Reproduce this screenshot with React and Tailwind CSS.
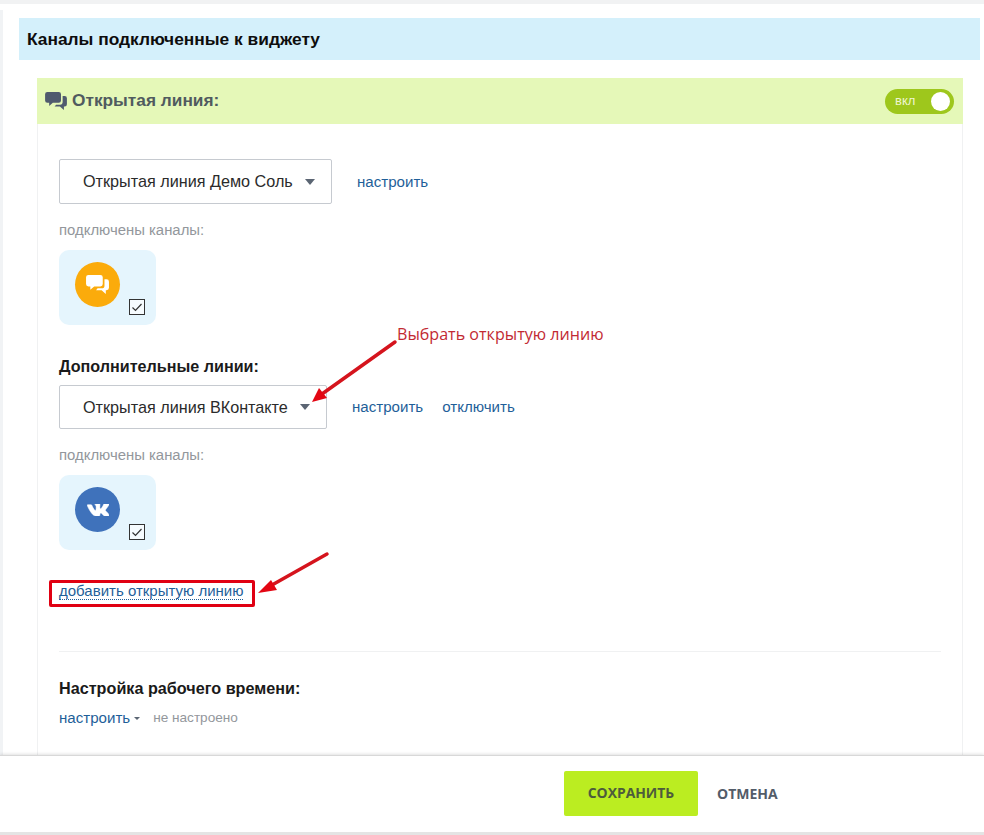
import React from "react";

const Chat = ({ className, fill }) => (
  <svg viewBox="0 0 24 22" className={className} fill={fill}>
    <path d="M2.5 1h12.5A2.5 2.5 0 0 1 17.500 3.500v7A2.500 2.500 0 0 1 15 13H8.500L4.500 16.500V13h-2A2.500 2.500 0 0 1 0 10.500v-7A2.500 2.500 0 0 1 2.500 1z" />
    <path d="M19.300 5.500h2.200A2.500 2.500 0 0 1 24 8v6.500a2.500 2.500 0 0 1-2.500 2.500h-.8v4l-4.400-4H10.500l1.600-2h4.400a2.800 2.800 0 0 0 2.800-2.800z" />
  </svg>
);

const Caret = () => <span className="w-0 h-0 border-x-[5.5px] border-x-transparent border-t-[6px] border-t-[#5b6573]" />;

const Check = () => (
  <span className="absolute left-[70px] top-[49px] w-[16px] h-[16px] border border-[#333] bg-[#f6fbfe] flex items-center justify-center">
    <svg viewBox="0 0 12 12" className="w-[12px] h-[12px]" fill="none" stroke="#333" strokeWidth="1.2"><path d="M1.5 6.5 4.5 9.5 10.5 3" /></svg>
  </span>
);

const Tile = ({ color, children }) => (
  <div className="relative w-[97px] h-[75px] rounded-[10px] bg-[#e5f5fd]">
    <div className="absolute left-[16px] top-[12px] w-[45px] h-[45px] rounded-full flex items-center justify-center" style={{ backgroundColor: color }}>{children}</div>
    <Check />
  </div>
);

const Select = ({ w, h, label }) => (
  <div className={`${w} ${h} border border-[#c6cad0] rounded-[2px] bg-white flex items-center pl-[23px] text-[16.2px] text-[#2b2b2b]`}>
    <span>{label}</span>
    <span className="ml-[12px] flex"><Caret /></span>
  </div>
);

const Link = ({ children }) => <a className="text-[#1f5f99] text-[15.1px]">{children}</a>;

export default function App() {
  return (
    <div className="relative w-[984px] h-[835px] overflow-hidden bg-white flex flex-col font-['Liberation_Sans',Arial,sans-serif]">
      <div className="h-[4px] bg-[#f1f2f3] shrink-0" />
      <div className="flex-1 min-h-0 overflow-hidden mt-[6px] pl-[19px] pr-[4px] pt-[8px] border-l-[3px] border-[#f1f3f5]">
        <div className="-ml-[3px] h-[42px] bg-[#d4f0fb] flex items-center pl-[8px] pt-[1px] text-[17.35px] font-bold text-[#0d0d0d]">Каналы подключенные к виджету</div>
        <div className="-ml-[3px] px-[18px] pr-[17px] pt-[18px]">
          <div className="border-x border-[#f0f1f2] h-[700px]">
            <div className="-mx-px h-[46px] bg-[#e5f8b8] flex items-center justify-between pl-[8px] pr-[9px]">
              <div className="flex items-center gap-[5px] pb-[1px] text-[17.3px] font-bold text-[#505b5f]">
                <Chat className="w-[22px] h-[20px]" fill="#4f5a6e" />
                <span>Открытая линия:</span>
              </div>
              <div className="relative w-[69px] h-[25px] rounded-full bg-[#9ec71c] flex items-center pl-[10px] text-[13px] text-[#eef6d0]">
                вкл
                <span className="absolute right-[4px] top-[3px] w-[19px] h-[19px] rounded-full bg-white" />
              </div>
            </div>
            <div className="pl-[21px] pr-[21px] pt-[35px]">
              <div className="flex items-center gap-[25px]">
                <Select w="w-[273px]" h="h-[45px]" label="Открытая линия Демо Соль" />
                <span className="pt-[1px]"><Link>настроить</Link></span>
              </div>
              <div className="mt-[16px] h-[20px] leading-[20px] text-[14.9px] text-[#93979c]">подключены каналы:</div>
              <div className="mt-[10px]">
                <Tile color="#fbab0b"><Chat className="w-[23px] h-[21px]" fill="#fff" /></Tile>
              </div>
              <div className="mt-[31px] h-[20px] leading-[20px] text-[16.15px] font-bold text-[#1a1a1a]">Дополнительные линии:</div>
              <div className="mt-[9px] flex items-center">
                <Select w="w-[268px]" h="h-[44px]" label="Открытая линия ВКонтакте" />
                <span className="ml-[25px]"><Link>настроить</Link></span>
                <span className="ml-[19px]"><Link>отключить</Link></span>
              </div>
              <div className="mt-[16px] h-[20px] leading-[20px] text-[14.9px] text-[#93979c]">подключены каналы:</div>
              <div className="mt-[10px]">
                <Tile color="#3f72bb">
                  <svg viewBox="0 0 22 12" className="w-[22px] h-[12px]" fill="#fff" stroke="#fff" strokeWidth="0.5">
                    <path d="M10.800 12h1.300s.4 0 .6-.3c.2-.2.2-.6.2-.6s0-1.800.8-2.100c.8-.3 1.900 1.800 3 2.500.8.6 1.500.5 1.500.5l3-.04s1.600-.1.800-1.300c-.1-.1-.5-1-2.300-2.700-1.900-1.800-1.700-1.500.7-4.700 1.400-1.900 2-3.100 1.800-3.600-.2-.5-1.200-.4-1.200-.4h-3.400s-.3 0-.4.1c-.2.1-.3.3-.3.3s-.5 1.400-1.200 2.600c-1.500 2.500-2.100 2.700-2.400 2.500-.6-.4-.4-1.500-.4-2.300 0-2.500.4-3.500-.7-3.800C12.300.1 12 0 11.100 0 9.900 0 8.900 0 8.300.3c-.4.2-.7.600-.5.600.2 0 .7.100 1 .5.4.5.3 1.600.3 1.600s.2 3-.5 3.400c-.5.300-1.100-.3-2.500-2.600C5.400 2.600 4.900 1.300 4.900 1.300s-.1-.3-.3-.4C4.400.7 4.100.7 4.100.7H.9S.4.700.2.900c-.2.2 0 .6 0 .6s2.500 5.800 5.300 8.700C8.100 12.900 10.800 12 10.800 12z" />
                  </svg>
                </Tile>
              </div>
              <div className="mt-[32px] relative w-fit">
                <a className="block text-[15px] leading-[17px] text-[#1f5f99] border-b border-dotted border-[#1f5f99]">добавить открытую линию</a>
                <div className="absolute -left-[10px] -top-[2px] w-[206px] h-[27px] border-[3px] border-[#e00012] rounded-[2px]" />
              </div>
              <div className="mt-[51px] border-t border-[#f0f1f2]" />
              <div className="mt-[26px] h-[20px] leading-[20px] text-[16.2px] font-bold text-[#1a1a1a]">Настройка рабочего времени:</div>
              <div className="mt-[10px] flex items-center h-[20px]">
                <Link>настроить</Link>
                <span className="ml-[4px] w-0 h-0 border-x-[3px] border-x-transparent border-t-[3px] border-t-[#5b6573]" />
                <span className="ml-[13px] text-[13.6px] text-[#93979c]">не настроено</span>
              </div>
            </div>
          </div>
        </div>
      </div>

      <div className="absolute left-0 right-0 top-[755px] h-[77px] bg-white border-t border-[#d8d8d8] shadow-[0_-1px_3px_rgba(0,0,0,0.12)] flex items-center pl-[564px] pb-[2px] font-['Open_Sans',sans-serif]">
        <div className="w-[134px] h-[45px] bg-[#bbed21] rounded-[2px] flex items-center justify-center text-[13.9px] font-bold text-[#4d5b3c]">СОХРАНИТЬ</div>
        <div className="ml-[19px] text-[14px] font-bold text-[#535c69]">ОТМЕНА</div>
      </div>
      <div className="absolute left-0 right-0 bottom-0 h-[3px] bg-[#e4e4e4]" />

      <div className="absolute left-[397px] top-[323px] text-[16.1px] leading-[22px] text-[#c22a33] font-['Open_Sans',sans-serif]">Выбрать открытую линию</div>
      <svg className="absolute left-0 top-0 w-[984px] h-[835px] pointer-events-none" viewBox="0 0 984 835" fill="#e30613" stroke="#d5141d">
        <path d="M395 342 322 394" strokeWidth="3.500" strokeLinecap="round" />
        <path d="M312 402 319 388 327 398z" stroke="none" />
        <path d="M327 554 272 585" strokeWidth="3.500" strokeLinecap="round" />
        <path d="M258 593 271 580 277 590z" stroke="none" />
      </svg>
    </div>
  );
}
